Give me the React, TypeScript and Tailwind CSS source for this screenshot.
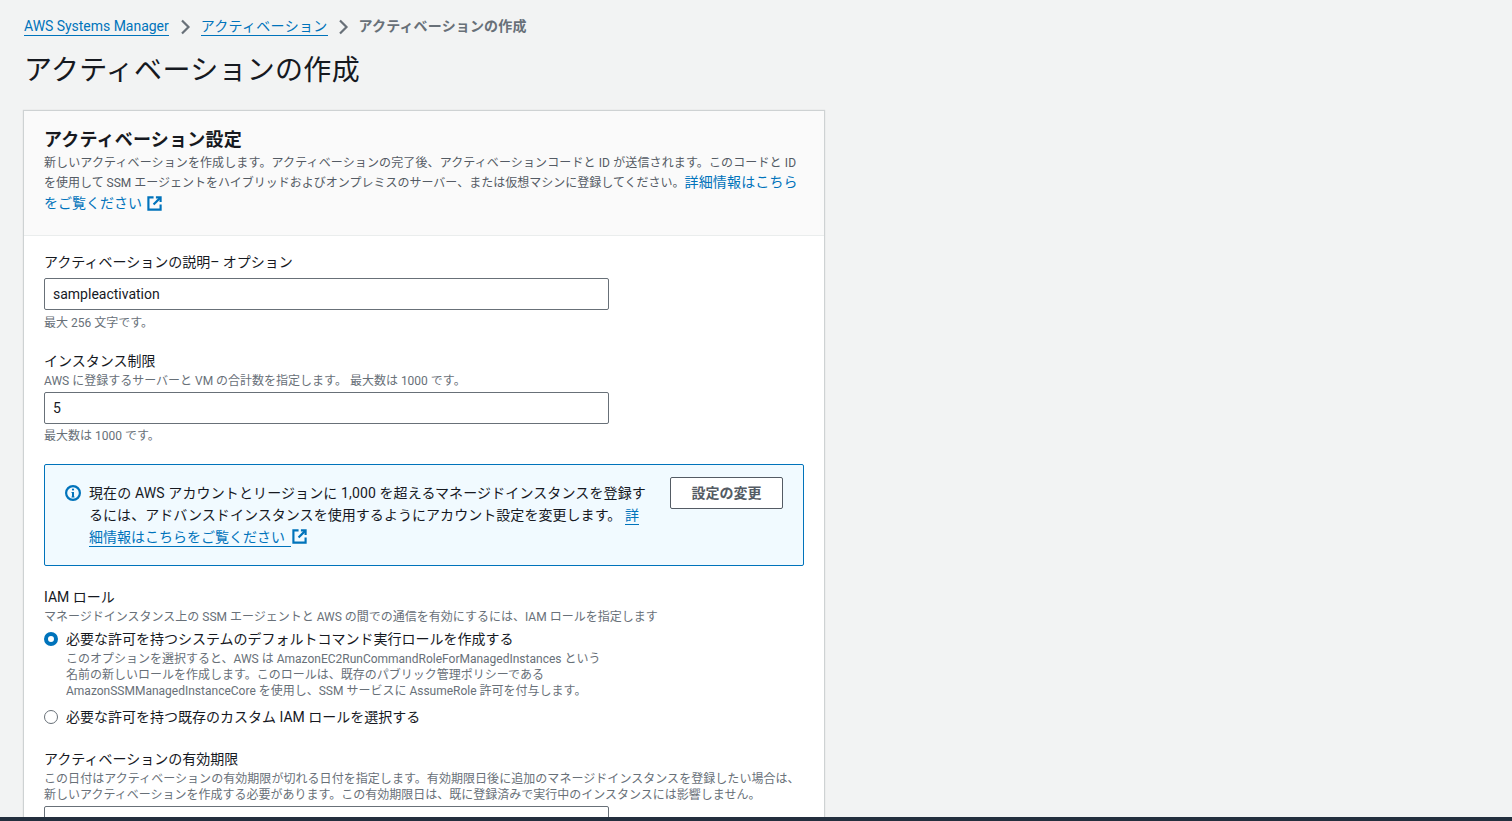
const F = "font-['Roboto','Noto_Sans_CJK_JP',sans-serif]";

function External({ className }: { className: string }) {
  return (
    <svg viewBox="0 0 16 16" fill="none" stroke="#0073bb" strokeWidth="2.3" className={className}>
      <path d="M7 1.5H1.5v13h13V9" />
      <path d="M9.5 1.5h5V6.5" />
      <path d="M14 2 7 9" />
    </svg>
  );
}

function Chevron() {
  return (
    <svg viewBox="0 0 16 16" fill="none" stroke="#687078" strokeWidth="2.2" className="w-4 h-4 mx-[6px]">
      <path d="M5 1.5 11.5 8 5 14.5" />
    </svg>
  );
}

export default function App() {
  return (
    <div className={`${F} h-[821px] overflow-hidden bg-[#f2f3f3] flex flex-col text-[#16191f]`}>
      <div className="flex-1 min-h-0 overflow-hidden pl-6">
        <nav className="h-[18px] mt-[18px] flex items-center text-sm leading-[18px]">
          <a className="text-[#0073bb] border-b border-[#0073bb] leading-[17px] tracking-[-0.03px]">AWS Systems Manager</a>
          <span className="ml-[2px]"><Chevron /></span>
          <a className="text-[#0073bb] border-b border-[#0073bb] leading-[17px] ml-[2px] tracking-[0.3px]">アクティベーション</a>
          <span className="ml-[1px]"><Chevron /></span>
          <span className="text-[#687078] font-bold ml-[2px] mb-[2px] tracking-[0.15px]">アクティベーションの作成</span>
        </nav>
        <h1 className="mt-[17px] text-[28px] leading-9 font-normal tracking-[0.3px]">アクティベーションの作成</h1>
        <section className="mt-[22px] w-[800px] bg-white shadow-[0_0_1px_1px_rgba(0,28,36,0.15)]">
          <header className="h-[125px] bg-[#fafafa] border-b border-[#eaeded] px-5 pt-[18px]">
            <h2 className="text-lg leading-[22px] font-bold tracking-[0.2px]">アクティベーション設定</h2>
            <p className="text-xs leading-[20px] text-[#545b64] mt-[2px] w-[770px]">
              <span className="tracking-[0.12px]">新しいアクティベーションを作成します。アクティベーションの完了後、アクティベーションコードと ID が送信されます。このコードと ID</span><br />
              を使用して SSM エージェントをハイブリッドおよびオンプレミスのサーバー、または仮想マシンに登録してください。<span className="text-sm leading-4 text-[#0073bb] tracking-[0.15px]">詳細情報はこちら</span><br />
              <span className="text-sm text-[#0073bb] inline-flex items-center">をご覧ください<External className="w-[15px] h-[15px] ml-[5px]" /></span>
            </p>
          </header>
          <div className="px-5 pt-[16px]">
            <label className="block text-sm leading-5">アクティベーションの説明– オプション</label>
            <div className="mt-[6px] h-8 w-[565px] border border-[#687078] rounded-[2px] bg-white px-2 text-sm leading-[30px]">sampleactivation</div>
            <p className="text-xs leading-4 text-[#687078] mt-[5px]">最大 256 文字です。</p>

            <label className="block text-sm leading-5 mt-[20px]">インスタンス制限</label>
            <p className="text-xs leading-4 text-[#687078] mt-[2px]">AWS に登録するサーバーと VM の合計数を指定します。 最大数は 1000 です。</p>
            <div className="mt-[3px] h-8 w-[565px] border border-[#687078] rounded-[2px] bg-white px-2 text-sm leading-[30px]">5</div>
            <p className="text-xs leading-4 text-[#687078] mt-[4px]">最大数は 1000 です。</p>

            <div className="mt-[20px] h-[102px] w-[760px] border border-[#0073bb] rounded-[2px] bg-[#f1faff] flex pl-5 pr-5 pt-[12px]">
              <svg viewBox="0 0 16 16" className="w-4 h-4 mt-[8px] shrink-0" fill="none">
                <circle cx="8" cy="8" r="6.9" stroke="#0073bb" strokeWidth="2.2" />
                <path d="M8 7v5" stroke="#0073bb" strokeWidth="2" />
                <path d="M6.5 7.5H8M6.5 12h3" stroke="#0073bb" strokeWidth="1.2" />
                <circle cx="8" cy="4.6" r="1.1" fill="#0073bb" />
              </svg>
              <p className="ml-2 w-[565px] text-sm leading-[22px] pt-[5px]">
                <span className="tracking-[0.12px]">現在の AWS アカウントとリージョンに 1,000 を超えるマネージドインスタンスを登録す</span><br />
                <span className="tracking-[0.05px]">るには、アドバンスドインスタンスを使用するようにアカウント設定を変更します。 </span><span className="text-[#0073bb] border-b border-[#0073bb] pb-[1px]">詳</span><br />
                <span className="text-[#0073bb] border-b border-[#0073bb] pb-[1px] pr-[6px]">細情報はこちらをご覧ください</span>
                <External className="inline w-[15px] h-[15px] ml-[1px] align-[-2px]" />
              </p>
              <button className="ml-auto h-8 w-[113px] shrink-0 border border-[#545b64] rounded-[2px] bg-white text-sm font-bold text-[#545b64]">設定の変更</button>
            </div>

            <label className="block text-sm leading-5 mt-[21px]">IAM ロール</label>
            <p className="text-xs leading-4 text-[#687078] mt-[2px]">マネージドインスタンス上の SSM エージェントと AWS の間での通信を有効にするには、IAM ロールを指定します</p>
            <div className="flex mt-[4px]">
              <span className="mt-[3px] w-[14px] h-[14px] rounded-full border-[4px] border-[#0073bb] bg-white shrink-0" />
              <div className="ml-2">
                <div className="text-sm leading-5">必要な許可を持つシステムのデフォルトコマンド実行ロールを作成する</div>
                <p className="text-xs leading-4 text-[#687078] mt-[2px]">
                  このオプションを選択すると、AWS は AmazonEC2RunCommandRoleForManagedInstances という<br />
                  名前の新しいロールを作成します。このロールは、既存のパブリック管理ポリシーである<br />
                  AmazonSSMManagedInstanceCore を使用し、SSM サービスに AssumeRole 許可を付与します。
                </p>
              </div>
            </div>
            <div className="flex mt-[8px]">
              <span className="mt-[3px] w-[14px] h-[14px] rounded-full border border-[#687078] bg-white shrink-0" />
              <div className="ml-2 text-sm leading-5">必要な許可を持つ既存のカスタム IAM ロールを選択する</div>
            </div>

            <label className="block text-sm leading-5 mt-[22px]">アクティベーションの有効期限</label>
            <p className="text-xs leading-4 text-[#687078] mt-[2px]">
              <span className="tracking-[0.05px]">この日付はアクティベーションの有効期限が切れる日付を指定します。有効期限日後に追加のマネージドインスタンスを登録したい場合は、</span><br />
              新しいアクティベーションを作成する必要があります。この有効期限日は、既に登録済みで実行中のインスタンスには影響しません。
            </p>
            <div className="mt-[3px] h-8 w-[565px] border border-[#687078] rounded-[2px] bg-white" />
          </div>
        </section>
      </div>
      <div className="h-[4px] bg-[#232f3e] shrink-0" />
    </div>
  );
}
